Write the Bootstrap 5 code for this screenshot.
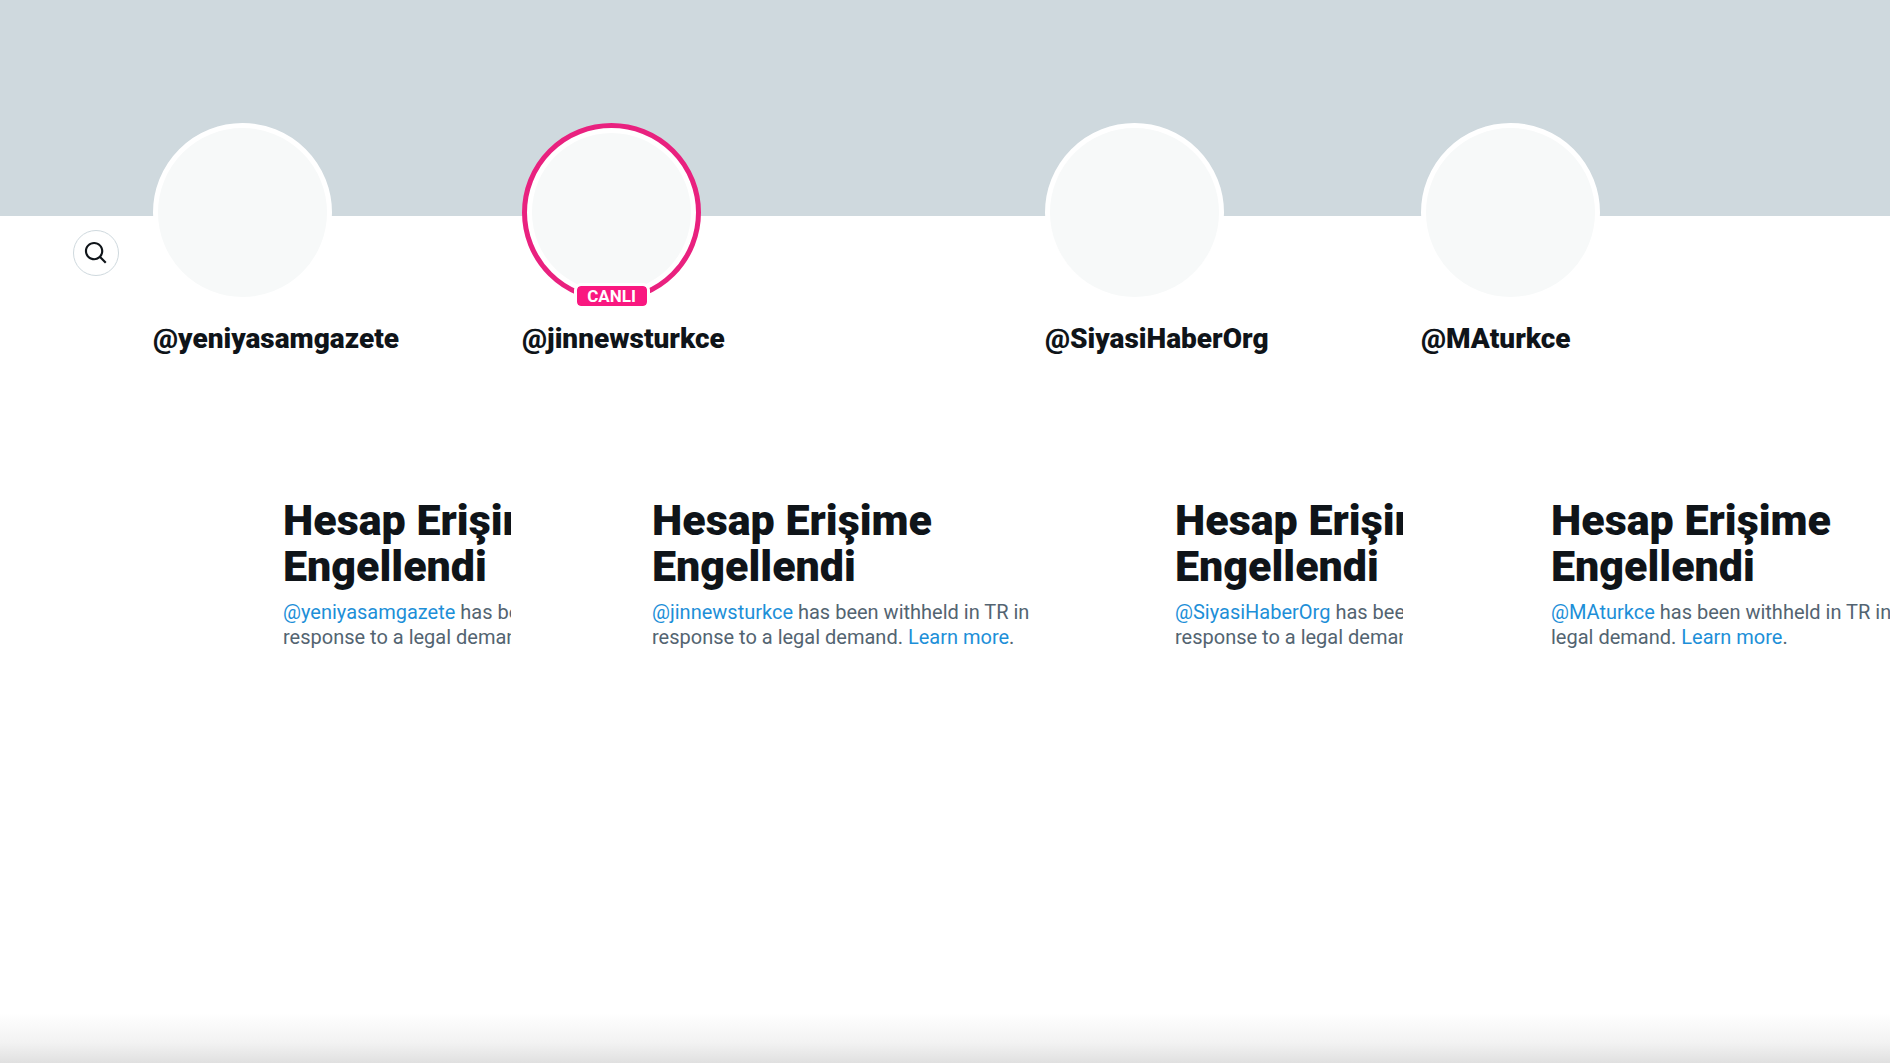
<!DOCTYPE html>
<html lang="tr">
<head>
<meta charset="utf-8">
<meta name="viewport" content="width=device-width, initial-scale=1">
<title>Hesap Erişime Engellendi</title>
<link href="https://cdn.jsdelivr.net/npm/bootstrap@5.3.0/dist/css/bootstrap.min.css" rel="stylesheet">
<style>
body { font-family: Roboto, "Liberation Sans", sans-serif; color: #0f1419; background: #fff; }
.profiles { display: grid; grid-template-columns: 511fr 523fr 369fr 487fr; }
.profile { min-width: 0; --gutter: 11px; }
.profile.first { --gutter: 153px; }
.profile.last { --gutter: 18px; }
.cover { height: 216px; background: #cfd9de; }
.profile-body { padding-left: var(--gutter); }
.avatar { width: 179px; height: 179px; margin-top: -93px; border: 5px solid #fff; background: #f7f9f9; }
.avatar.live { border-color: #e9217f; box-shadow: inset 0 0 0 5px #fff; }
.live-tag { left: 50%; bottom: -12px; transform: translateX(-50%); border: 3px solid #fff; border-radius: 7px; background: #f91880; background-clip: padding-box; color: #fff; font-size: 17px; line-height: 20px; width: 76px; }
.search-btn { left: 73px; top: 230px; width: 46px; height: 46px; border: 1px solid #cfd9de; color: #0f1419; background: #fff; }
.handle { font-size: 28px; line-height: 32px; margin: 21px 0 0; font-weight: 900; }
.notice { margin: 142px 0 0 130px; white-space: nowrap; }
.notice h2 { font-size: 43px; line-height: 46px; font-weight: 900; margin: 0 0 11px; }
.notice p { font-size: 20px; line-height: 25px; color: #536471; margin: 0; }
.notice a { color: #1d8fd8; }
.page-fade { height: 50px; background: linear-gradient(#fff, #f2f2f2 60%, #e0e0e0); }
</style>
<script src="https://cdn.jsdelivr.net/npm/bootstrap@5.3.0/dist/js/bootstrap.bundle.min.js"></script>
</head>
<body>
<div class="min-vh-100 d-flex flex-column position-relative overflow-hidden">
  <main class="profiles flex-grow-1">
    <section class="profile first overflow-hidden">
      <div class="cover"></div>
      <div class="profile-body">
        <div class="avatar rounded-circle"></div>
        <h1 class="handle">@yeniyasamgazete</h1>
        <div class="notice">
          <h2>Hesap Erişime<br>Engellendi</h2>
          <p><a class="text-decoration-none" href="#">@yeniyasamgazete</a> has been<br>response to a legal demand.</p>
        </div>
      </div>
    </section>
    <section class="profile overflow-hidden">
      <div class="cover"></div>
      <div class="profile-body">
        <div class="avatar live rounded-circle position-relative">
          <span class="live-tag position-absolute fw-bold text-center">CANLI</span>
        </div>
        <h1 class="handle">@jinnewsturkce</h1>
        <div class="notice">
          <h2>Hesap Erişime<br>Engellendi</h2>
          <p><a class="text-decoration-none" href="#">@jinnewsturkce</a> has been withheld in TR in<br>response to a legal demand. <a class="text-decoration-none" href="#">Learn more</a>.</p>
        </div>
      </div>
    </section>
    <section class="profile overflow-hidden">
      <div class="cover"></div>
      <div class="profile-body">
        <div class="avatar rounded-circle"></div>
        <h1 class="handle">@SiyasiHaberOrg</h1>
        <div class="notice">
          <h2>Hesap Erişime<br>Engellendi</h2>
          <p><a class="text-decoration-none" href="#">@SiyasiHaberOrg</a> has been<br>response to a legal demand.</p>
        </div>
      </div>
    </section>
    <section class="profile last overflow-hidden">
      <div class="cover"></div>
      <div class="profile-body">
        <div class="avatar rounded-circle"></div>
        <h1 class="handle">@MAturkce</h1>
        <div class="notice">
          <h2>Hesap Erişime<br>Engellendi</h2>
          <p><a class="text-decoration-none" href="#">@MAturkce</a> has been withheld in TR in<br>legal demand. <a class="text-decoration-none" href="#">Learn more</a>.</p>
        </div>
      </div>
    </section>
  </main>
  <button type="button" class="search-btn btn rounded-circle p-0 position-absolute d-flex align-items-center justify-content-center" aria-label="Ara">
    <svg width="26" height="26" viewBox="0 0 24 24" fill="currentColor" aria-hidden="true"><path d="M10.25 3.75c-3.59 0-6.5 2.91-6.5 6.5s2.91 6.5 6.5 6.5c1.795 0 3.419-.726 4.596-1.904 1.178-1.177 1.904-2.801 1.904-4.596 0-3.59-2.91-6.5-6.5-6.5zm-8.5 6.5c0-4.694 3.806-8.5 8.5-8.5s8.5 3.806 8.5 8.5c0 1.986-.682 3.815-1.824 5.262l4.781 4.781-1.414 1.414-4.781-4.781c-1.447 1.142-3.276 1.824-5.262 1.824-4.694 0-8.5-3.806-8.5-8.5z"/></svg>
  </button>
  <div class="page-fade"></div>
</div>
</body>
</html>
